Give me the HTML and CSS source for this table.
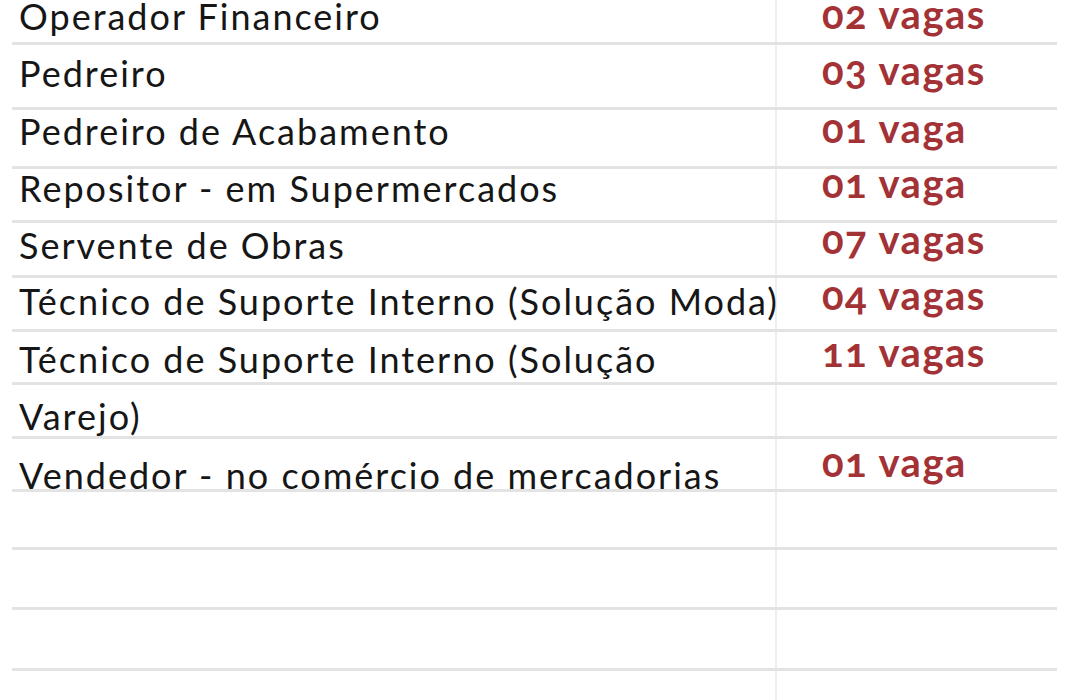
FILE: index.html
```html
<!DOCTYPE html>
<html lang="pt-BR">
<head>
<meta charset="utf-8">
<title>Vagas</title>
<link rel="stylesheet" href="styles.css">
</head>
<body>
<div class="sheet">
  <div class="row"><div class="job">Operador Financeiro</div><div class="qty">02 vagas</div></div>
  <div class="row"><div class="job">Pedreiro</div><div class="qty">03 vagas</div></div>
  <div class="row"><div class="job">Pedreiro de Acabamento</div><div class="qty">01 vaga</div></div>
  <div class="row"><div class="job">Repositor - em Supermercados</div><div class="qty">01 vaga</div></div>
  <div class="row"><div class="job">Servente de Obras</div><div class="qty">07 vagas</div></div>
  <div class="row"><div class="job">Técnico de Suporte Interno (Solução Moda)</div><div class="qty">04 vagas</div></div>
  <div class="row"><div class="job">Técnico de Suporte Interno (Solução</div><div class="qty">11 vagas</div></div>
  <div class="row"><div class="job">Varejo)</div><div class="qty"></div></div>
  <div class="row"><div class="job">Vendedor - no comércio de mercadorias</div><div class="qty">01 vaga</div></div>
  <div class="row"><div class="job"></div><div class="qty"></div></div>
  <div class="row"><div class="job"></div><div class="qty"></div></div>
  <div class="row"><div class="job"></div><div class="qty"></div></div>
</div>
</body>
</html>
```
FILE: styles.css
```css
html {
  margin: 0;
  padding: 0;
  background: #ffffff;
}
body {
  margin: 0;
  padding: 0;
  width: 1080px;
  height: 700px;
  overflow: hidden;
  font-family: "Lato", "Open Sans", sans-serif;
}
.sheet {
  position: relative;
  margin-left: 12px;
  width: 1045px;
  height: 700px;
}
.sheet::before {
  content: "";
  position: absolute;
  z-index: -1;
  left: 763px;
  top: 0;
  bottom: 0;
  width: 2px;
  background: #eeeeee;
}
.row {
  display: grid;
  grid-template-columns: 764px 1fr;
  grid-template-rows: minmax(0, 1fr);
  align-items: end;
  box-sizing: border-box;
  border-bottom: 3px solid #e3e3e3;
}
.job {
  padding-left: 7px;
  padding-bottom: 12px;
  font-size: 36px;
  font-weight: 400;
  letter-spacing: 2px;
  line-height: 1;
  color: #161616;
  white-space: nowrap;
}
.qty {
  padding-left: 46px;
  padding-bottom: 18px;
  font-size: 40px;
  font-weight: 700;
  letter-spacing: 1.5px;
  line-height: 1;
  color: #a33237;
  font-variant-numeric: oldstyle-nums;
  white-space: nowrap;
}

.row:nth-child(1) { height: 45px; }
.row:nth-child(2) { height: 65px; }
.row:nth-child(3) { height: 59px; }
.row:nth-child(4) { height: 54px; }
.row:nth-child(5) { height: 55px; }
.row:nth-child(6) { height: 54px; }
.row:nth-child(7) { height: 53px; }
.row:nth-child(8) { height: 54px; }
.row:nth-child(9) { height: 53px; }
.row:nth-child(10) { height: 58px; }
.row:nth-child(11) { height: 60px; }
.row:nth-child(12) { height: 61px; }

.row:nth-child(1) .job { padding-bottom: 8px; }
.row:nth-child(2) .job { padding-bottom: 16px; }
.row:nth-child(3) .job { padding-bottom: 17px; }
.row:nth-child(4) .job { padding-bottom: 14px; }
.row:nth-child(5) .job { padding-bottom: 12px; }
.row:nth-child(6) .job { padding-bottom: 10px; }
.row:nth-child(7) .job { padding-bottom: 5px; }
.row:nth-child(8) .job { padding-bottom: 2px; }
.row:nth-child(9) .job { padding-bottom: 0; margin-bottom: -4px; }

.row:nth-child(1) .qty { padding-bottom: 8px; }
.row:nth-child(2) .qty { padding-bottom: 17px; }
.row:nth-child(3) .qty { padding-bottom: 18px; }
.row:nth-child(4) .qty { padding-bottom: 17px; }
.row:nth-child(5) .qty { padding-bottom: 16px; }
.row:nth-child(6) .qty { padding-bottom: 14px; }
.row:nth-child(7) .qty { padding-bottom: 10px; }
.row:nth-child(9) .qty { padding-bottom: 7px; }
```
